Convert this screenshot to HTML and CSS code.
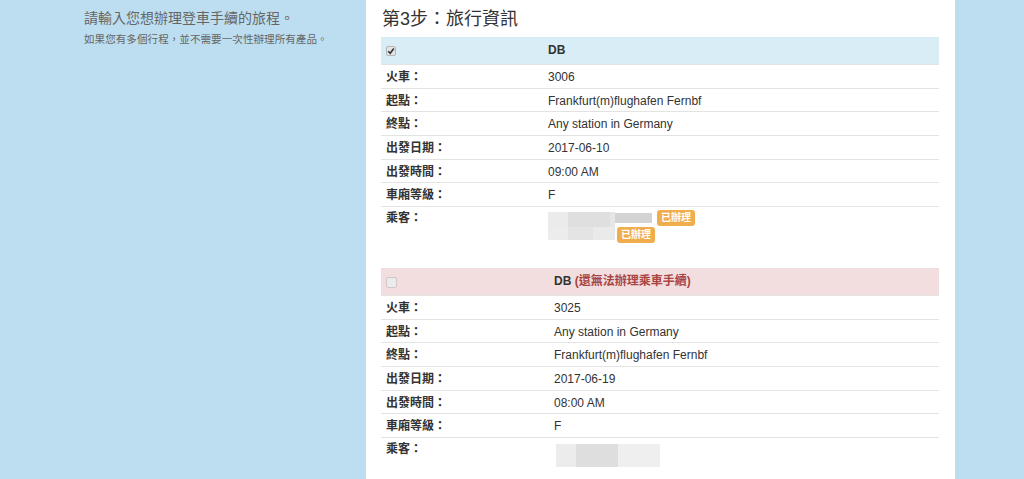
FILE: index.html
```html
<!DOCTYPE html>
<html lang="zh-Hant">
	<head>
		<meta charset="UTF-8" />
		<meta name="viewport" content="width=device-width, initial-scale=1.0" />
		<title>第3步：旅行資訊</title>
		<link rel="stylesheet" href="styles.css">
	</head>
	<body>
		<div class="page">
			<div class="intro">
				<p class="intro-lead">請輸入您想辦理登車手續的旅程。</p>
				<p class="intro-note">如果您有多個行程，並不需要一次性辦理所有產品。</p>
			</div>

			<div class="panel">
				<h2 class="step-title">第3步：旅行資訊</h2>

				<!-- trip 1: selectable -->
				<table class="trip trip-one">
					<tr class="trip-head ok">
						<td class="col-label">
							<span class="cbx">
								<svg width="8" height="8" viewBox="0 0 8 8"><path d="M1.2 4.2 L3.2 6.2 L6.8 1.4" fill="none" stroke="#333" stroke-width="1.6"/></svg>
							</span>
						</td>
						<td><strong>DB</strong></td>
					</tr>
					<tr><th>火車：</th><td>3006</td></tr>
					<tr><th>起點：</th><td>Frankfurt(m)flughafen Fernbf</td></tr>
					<tr><th>終點：</th><td>Any station in Germany</td></tr>
					<tr><th>出發日期：</th><td>2017-06-10</td></tr>
					<tr><th>出發時間：</th><td>09:00 AM</td></tr>
					<tr><th>車廂等級：</th><td>F</td></tr>
					<tr class="pax-row">
						<th>乘客：</th>
						<td>
							<div class="pax-line">
								<span class="blur blur-a"></span>
								<span class="blur-strip"></span>
								<span class="badge">已辦理</span>
							</div>
							<div class="pax-line">
								<span class="blur blur-b"></span>
								<span class="badge">已辦理</span>
							</div>
						</td>
					</tr>
				</table>

				<!-- trip 2: not yet available -->
				<table class="trip trip-two">
					<tr class="trip-head no">
						<td class="col-label"><span class="cbx off"></span></td>
						<td><strong>DB</strong> <strong class="warn">(還無法辦理乘車手續)</strong></td>
					</tr>
					<tr><th>火車：</th><td>3025</td></tr>
					<tr><th>起點：</th><td>Any station in Germany</td></tr>
					<tr><th>終點：</th><td>Frankfurt(m)flughafen Fernbf</td></tr>
					<tr><th>出發日期：</th><td>2017-06-19</td></tr>
					<tr><th>出發時間：</th><td>08:00 AM</td></tr>
					<tr><th>車廂等級：</th><td>F</td></tr>
					<tr class="pax-row">
						<th>乘客：</th>
						<td><span class="blur blur-c"></span></td>
					</tr>
				</table>
			</div>
		</div>
	</body>
</html>
```

FILE: styles.css
```css
html,
body {
	margin: 0;
	padding: 0;
}

body {
	font-family: "Liberation Sans", Arial, "Noto Sans CJK TC", sans-serif;
	font-size: 12px;
	color: #333;
	background-color: #bddef0;
}

.page {
	display: flex;
	min-height: 100vh;
}

.intro {
	width: 366px;
	box-sizing: border-box;
	padding: 9px 0 0 84px;
	color: #666;
}

.intro p {
	margin: 0;
}

.intro-lead {
	font-size: 14px;
	line-height: 18px;
}

.intro-note {
	margin-top: 4px !important;
	font-size: 10.6px;
	line-height: 16px;
}

.panel {
	width: 589px;
	box-sizing: border-box;
	padding: 6px 16px 0 15px;
	background-color: #fff;
}

.step-title {
	margin: 0 0 5px 1px;
	font-size: 18px;
	font-weight: normal;
	line-height: 26px;
	color: #333;
}

.trip {
	width: 100%;
	border-collapse: collapse;
	table-layout: fixed;
	margin-bottom: 21px;
}

.trip th,
.trip td {
	padding: 4px 5px 2px;
	line-height: 16.67px;
	text-align: left;
	vertical-align: top;
	border-top: 1px solid #e3e3e3;
}

.trip th {
	font-weight: bold;
}

.trip-one th,
.trip-one .col-label {
	width: 152px;
}

.trip-two th,
.trip-two .col-label {
	width: 158px;
}

.trip-head td {
	padding: 5px;
	line-height: 17px;
	border-top: none;
}

.trip-head.ok td {
	background-color: #d9edf7;
}

.trip-head.no td {
	background-color: #f2dede;
}

.warn {
	color: #a94442;
}

.cbx {
	display: inline-block;
	width: 8px;
	height: 8px;
	margin: 4px 0 0 0;
	border: 1px solid #b5b5b5;
	border-radius: 2px;
	background-color: #e4e4e4;
	vertical-align: top;
}

.cbx svg {
	display: block;
}

.cbx.off {
	width: 9px;
	height: 9px;
	border-color: #d2c6c6;
	background-color: #ececec;
}

.pax-row td,
.pax-row th {
	padding-top: 3px;
	padding-bottom: 3px;
}

.pax-line {
	display: flex;
	align-items: stretch;
	height: 17px;
}

.blur {
	display: inline-block;
}

.blur-a {
	width: 67px;
	margin-top: 2px;
	background: linear-gradient(to right, #ebebeb 0 20px, #dfdfdf 20px 62px, #e6e6e6 62px);
}

.blur-strip {
	width: 37px;
	height: 10px;
	margin-top: 3px;
	background-color: #d4d4d4;
}

.blur-b {
	width: 67px;
	height: 13px;
	background: linear-gradient(to right, #ececec 0 20px, #e4e4e4 20px 45px, #eaeaea 45px);
}

.blur-c {
	width: 104px;
	height: 23px;
	margin: 3px 0 0 2px;
	background: linear-gradient(to right, #ececec 0 20px, #dedede 20px 62px, #efefef 62px);
}

.badge {
	display: inline-block;
	align-self: flex-start;
	margin-left: 5px;
	padding: 0 4px;
	font-size: 10px;
	font-weight: bold;
	line-height: 16px;
	color: #fff;
	background-color: #f0ad4e;
	border-radius: 3px;
}

.pax-line + .pax-line .badge {
	margin-left: 2px;
}
```
